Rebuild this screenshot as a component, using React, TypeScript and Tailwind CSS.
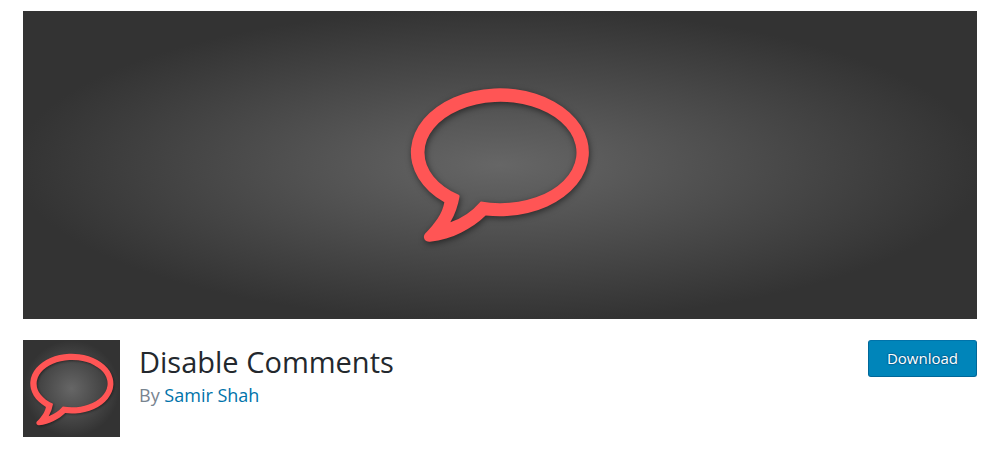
type BubbleProps = { className: string; viewBox: string };

function Bubble({ className, viewBox }: BubbleProps) {
  return (
    <svg className={className} viewBox={viewBox} aria-hidden="true">
      <path
        fill="#ff5555"
        fillRule="evenodd"
        d="M287 436.500 A267 192 0 1 0 163 397 C158 430 134 462 105 491 C97 501 104 517 120 515 C188 508 244 477 287 436.500 Z M273 394.500 A228 152 0 1 0 206 374.500 Q209 376 208.500 380 Q202 420 181 457 Q234 438 270 396.500 Q271.500 394.500 273 394.500 Z"
      />
    </svg>
  );
}

export default function App() {
  return (
    <main className="px-[23px] pt-[11px] pb-6 font-['Open_Sans',sans-serif]">
      <div className="flex h-[308px] items-center justify-center bg-[radial-gradient(ellipse_at_center,#666666,#333333_72%)]">
        <Bubble
          className="h-[190px] w-[220px] drop-shadow-[1px_2px_3px_rgba(0,0,0,0.5)]"
          viewBox="0 0 660 570"
        />
      </div>
      <header className="mt-[21px] flex items-start">
        <div className="size-[97px] shrink-0 bg-[radial-gradient(circle_at_center,#666666,#333333_70%)]">
          <Bubble
            className="size-full drop-shadow-[1px_1px_1px_rgba(0,0,0,0.4)]"
            viewBox="16 -33 623 623"
          />
        </div>
        <div className="ml-[19px] grow pt-1">
          <h1 className="text-[29px] leading-9 text-[#23282d]">Disable Comments</h1>
          <p className="text-lg leading-[30px] text-[#78848f]">
            By{" "}
            <a href="#author" className="text-[#0073aa]">
              Samir Shah
            </a>
          </p>
        </div>
        <button
          type="button"
          className="h-[37px] rounded-[3px] border border-[#006799] border-t-[#0073aa] bg-[#0085ba] px-[18px] text-[15px] text-white [text-shadow:0_-1px_1px_#006799,1px_0_1px_#006799,0_1px_1px_#006799,-1px_0_1px_#006799]"
        >
          Download
        </button>
      </header>
    </main>
  );
}
